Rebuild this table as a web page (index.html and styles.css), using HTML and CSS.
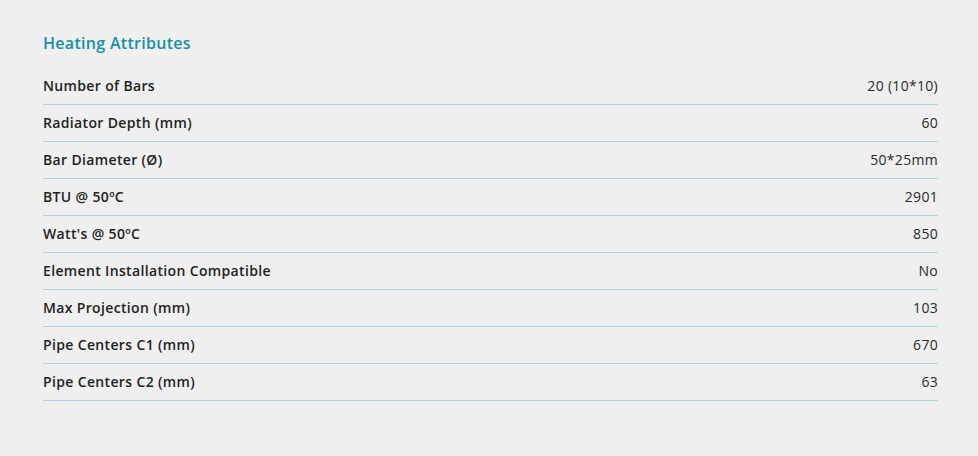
FILE: index.html
```html
<!DOCTYPE html>
<html>
<head>
<meta charset="utf-8">
<link rel="stylesheet" href="styles.css">
</head>
<body>
<section class="attrs">
  <h2 class="attrs-title">Heating Attributes</h2>
  <div class="attrs-list">
    <div class="row"><span class="label">Number of Bars</span><span class="value">20 (10*10)</span></div>
    <div class="row"><span class="label">Radiator Depth (mm)</span><span class="value">60</span></div>
    <div class="row"><span class="label">Bar Diameter (Ø)</span><span class="value">50*25mm</span></div>
    <div class="row"><span class="label">BTU @ 50ºC</span><span class="value">2901</span></div>
    <div class="row"><span class="label">Watt's @ 50ºC</span><span class="value">850</span></div>
    <div class="row"><span class="label">Element Installation Compatible</span><span class="value">No</span></div>
    <div class="row"><span class="label">Max Projection (mm)</span><span class="value">103</span></div>
    <div class="row"><span class="label">Pipe Centers C1 (mm)</span><span class="value">670</span></div>
    <div class="row"><span class="label">Pipe Centers C2 (mm)</span><span class="value">63</span></div>
  </div>
</section>
</body>
</html>
```

FILE: styles.css
```css
html, body {
  margin: 0;
  background: #efefef;
}
body {
  font-family: "Open Sans", "Inter", sans-serif;
  color: #222;
}
.attrs {
  padding: 33px 40px 0 43px;
}
.attrs-title {
  margin: 0 0 15px;
  font-size: 16px;
  line-height: 20px;
  font-weight: 600;
  color: #1a8fa3;
  letter-spacing: 0.3px;
}
.row {
  box-sizing: border-box;
  display: flex;
  justify-content: space-between;
  align-items: center;
  height: 37px;
  padding-bottom: 2px;
  border-bottom: 1px solid #a9d5dc;
  font-size: 14px;
}
.label {
  font-weight: 600;
  color: #222;
  letter-spacing: 0.35px;
}
.value {
  font-weight: 400;
  color: #2a2a2a;
  letter-spacing: 0.3px;
}
```
